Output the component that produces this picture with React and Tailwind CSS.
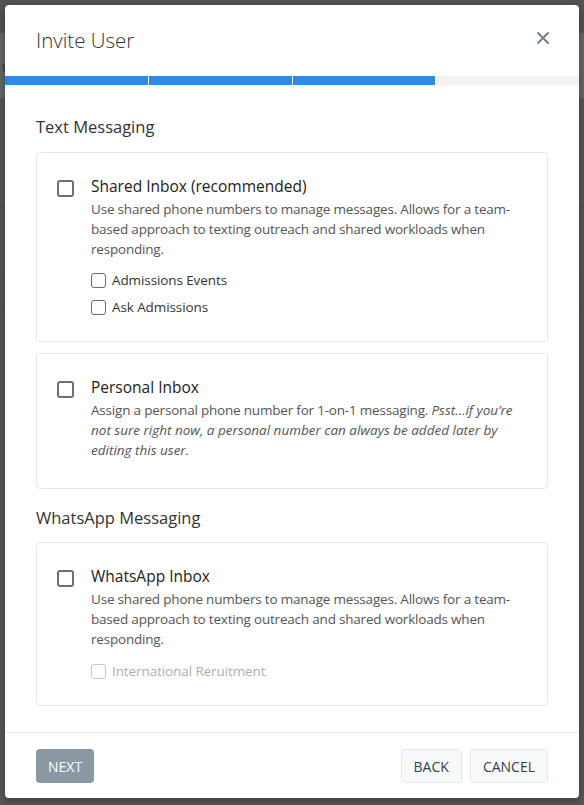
import React, { useState } from 'react';

const font = { fontFamily: '"Open Sans", "Noto Sans", sans-serif' };

const Box = ({ checked, onChange, small, disabled }) => (
  <button
    type="button"
    disabled={disabled}
    onClick={onChange}
    className={
      small
        ? `shrink-0 w-[15px] h-[15px] rounded-[3px] border-[1.5px] bg-white ${disabled ? 'border-[#c9c9c9]' : 'border-[#6b6b6b]'}`
        : 'shrink-0 w-[17px] h-[17px] rounded-[3px] border-2 border-[#707070] bg-white'
    }
  >
    {checked && (
      <svg viewBox="0 0 16 16" className="w-full h-full">
        <path d="M3.5 8.5l3 3 6-7" fill="none" stroke="#333" strokeWidth="2" />
      </svg>
    )}
  </button>
);

const SubOption = ({ label, disabled }) => {
  const [on, setOn] = useState(false);
  return (
    <label className="flex items-center gap-[6px] h-[20px]">
      <Box small checked={on} disabled={disabled} onChange={() => setOn(!on)} />
      <span className={`text-[13.5px] tracking-[-0.1px] ${disabled ? 'text-[#b0b0b0]' : 'text-[#333]'}`}>{label}</span>
    </label>
  );
};

const InboxCard = ({ title, children, subs = [], disabledSubs, subsGap = 'mt-[11px]', className = '' }) => {
  const [on, setOn] = useState(false);
  return (
    <div className={`border border-[#e4e9ef] rounded-[4px] bg-white pl-[20px] pr-[20px] pt-[22px] flex gap-[17px] ${className}`}>
      <div className="pt-[2px]">
        <Box checked={on} onChange={() => setOn(!on)} />
      </div>
      <div className="flex-1">
        <div className="text-[15.5px] leading-[22px] text-[#222]">{title}</div>
        <div className="text-[13.5px] tracking-[-0.2px] leading-[20px] text-[#555] mt-[2px]">{children}</div>
        {subs.length > 0 && (
          <div className={`${subsGap} flex flex-col gap-[7px]`}>
            {subs.map((s) => (
              <SubOption key={s} label={s} disabled={disabledSubs} />
            ))}
          </div>
        )}
      </div>
    </div>
  );
};

export default function App() {
  return (
    <div className="relative w-full h-[805px] overflow-hidden bg-[#575757]" style={font}>
      {/* page underneath the overlay */}
      <div className="h-[33px] bg-[#545454]" />
      <div className="h-[67px] bg-[#63676a] border-b border-[#4c4c4c] px-[2px] text-[#333] text-[15px] leading-[67px]">w</div>
      <div className="h-[107px] border-b border-[#4f4f4f]" />
      <div className="h-[68px] border-b border-[#4f4f4f]" />
      <div className="h-[37px] border-b border-[#4f4f4f]" />
      <div className="h-[488px]" />
      <div className="flex px-[30px] text-[15px] text-[#222] leading-[20px]">
        <span className="w-[245px]">1111110</span>
        <span className="w-[200px]">.</span>
        <span>Admin</span>
      </div>

      {/* modal */}
      <div className="absolute inset-0 px-[5px] pt-[5px]">
        <div className="bg-white rounded-[4px] shadow-[0_2px_8px_rgba(0,0,0,0.35)] flex flex-col">
          <div className="h-[71px] flex items-center justify-between pl-[31px] pr-[29px]">
            <h2 className="text-[20.5px] font-light text-[#333] leading-[28px] -mt-[1px]">Invite User</h2>
            <button type="button" className="w-[14px] h-[14px] -mt-[5px]">
              <svg viewBox="0 0 14 14" className="w-full h-full">
                <path d="M2 2l10 10M12 2L2 12" stroke="#6e7f8c" strokeWidth="1.8" strokeLinecap="round" />
              </svg>
            </button>
          </div>

          <div className="h-[9px] flex gap-[1px] bg-white">
            <div className="flex-1 bg-[#2f8ae6]" />
            <div className="flex-1 bg-[#2f8ae6]" />
            <div className="flex-1 bg-[#2f8ae6]" />
            <div className="flex-1 bg-[#f2f2f2]" />
          </div>

          <div className="px-[31px] pt-[30px] pb-[26px]">
            <h3 className="text-[16.5px] leading-[24px] text-[#333]">Text Messaging</h3>
            <InboxCard
              title="Shared Inbox (recommended)"
              subs={['Admissions Events', 'Ask Admissions']}
              className="mt-[13px] pb-[24px]"
            >
              Use shared phone numbers to manage messages. Allows for a team-based approach to texting outreach and shared workloads when responding.
            </InboxCard>
            <InboxCard title="Personal Inbox" className="mt-[11px] pb-[28px]">
              Assign a personal phone number for 1-on-1 messaging.{' '}
              <em className="tracking-normal">Psst…if you’re not sure right now, a personal number can always be added later by editing this user.</em>
            </InboxCard>

            <h3 className="text-[16.5px] leading-[24px] text-[#333] mt-[17px]">WhatsApp Messaging</h3>
            <InboxCard
              title="WhatsApp Inbox"
              subs={['International Reruitment']}
              disabledSubs
              subsGap="mt-[12px]"
              className="mt-[12px] pb-[24px]"
            >
              Use shared phone numbers to manage messages. Allows for a team-based approach to texting outreach and shared workloads when responding.
            </InboxCard>
          </div>

          <div className="border-t border-[#e6eaee] px-[31px] pt-[16px] pb-[15px] flex items-center justify-between">
            <button type="button" className="h-[34px] px-[12px] rounded-[4px] bg-[#8a98a2] text-white text-[14px] uppercase">
              Next
            </button>
            <div className="flex gap-[8px]">
              <button type="button" className="h-[34px] px-[12px] rounded-[4px] bg-[#f7f9fb] border border-[#e3e8ed] text-[#34424e] text-[14px] uppercase">
                Back
              </button>
              <button type="button" className="h-[34px] px-[12px] rounded-[4px] bg-[#f7f9fb] border border-[#e3e8ed] text-[#34424e] text-[14px] uppercase">
                Cancel
              </button>
            </div>
          </div>
        </div>
      </div>
    </div>
  );
}
